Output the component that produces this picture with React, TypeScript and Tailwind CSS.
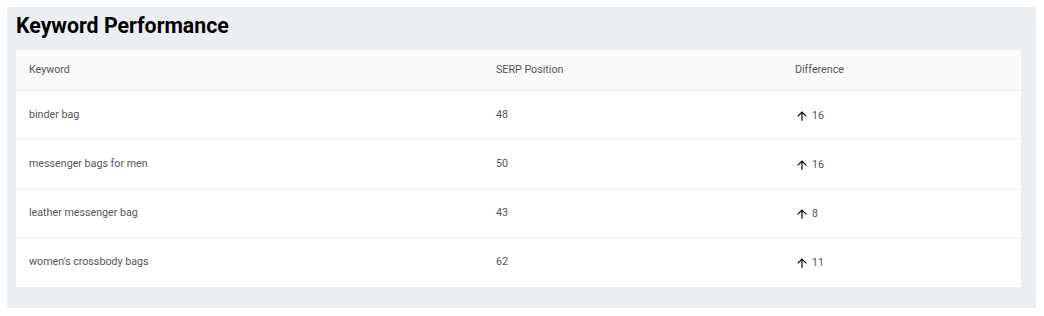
import React from "react";

const rows = [
  { k: "binder bag", p: 48, d: 16 },
  { k: "messenger bags for men", p: 50, d: 16 },
  { k: "leather messenger bag", p: 43, d: 8 },
  { k: "women's crossbody bags", p: 62, d: 11 },
];

function ArrowUp() {
  return (
    <svg width="14" height="14" viewBox="0 0 24 24" className="shrink-0">
      <path d="M4 12l1.41 1.41L11 7.83V20h2V7.83l5.58 5.59L20 12l-8-8-8 8z" fill="#000" />
    </svg>
  );
}

export default function App() {
  return (
    <div className="bg-white w-[1044px] h-[316px] p-[7px] pr-[8px]" style={{ fontFamily: "Roboto, 'Liberation Sans', sans-serif" }}>
      <div className="bg-[#eceff1] w-[1029px] h-[301px] pt-[5px] px-[9px] pb-[22px]">
        <h1 className="text-[21.3px] leading-[28px] font-bold text-black h-[38px]">Keyword Performance</h1>
        <div className="bg-white w-[1005px]">
          <div className="flex h-[41px] items-center bg-[#fafafa] border-b border-[#e6e6e6] text-[10.7px] text-[#555]">
            <div className="w-[467px] pl-[13px]">Keyword</div>
            <div className="w-[299px] pl-[13px]">SERP Position</div>
            <div className="flex-1 pl-[13px]">Difference</div>
          </div>
          {rows.map((r, i) => (
            <div
              key={r.k}
              className={`flex items-center h-[49px] text-[10.7px] text-[#555] ${i < rows.length - 1 ? "border-b border-[#eeeeee]" : ""}`}
            >
              <div className="w-[467px] pl-[13px]">{r.k}</div>
              <div className="w-[299px] pl-[13px]">{r.p}</div>
              <div className="flex-1 pl-[13px] flex items-center gap-[3px] pt-[2px]">
                <ArrowUp />
                <span>{r.d}</span>
              </div>
            </div>
          ))}
        </div>
      </div>
    </div>
  );
}
